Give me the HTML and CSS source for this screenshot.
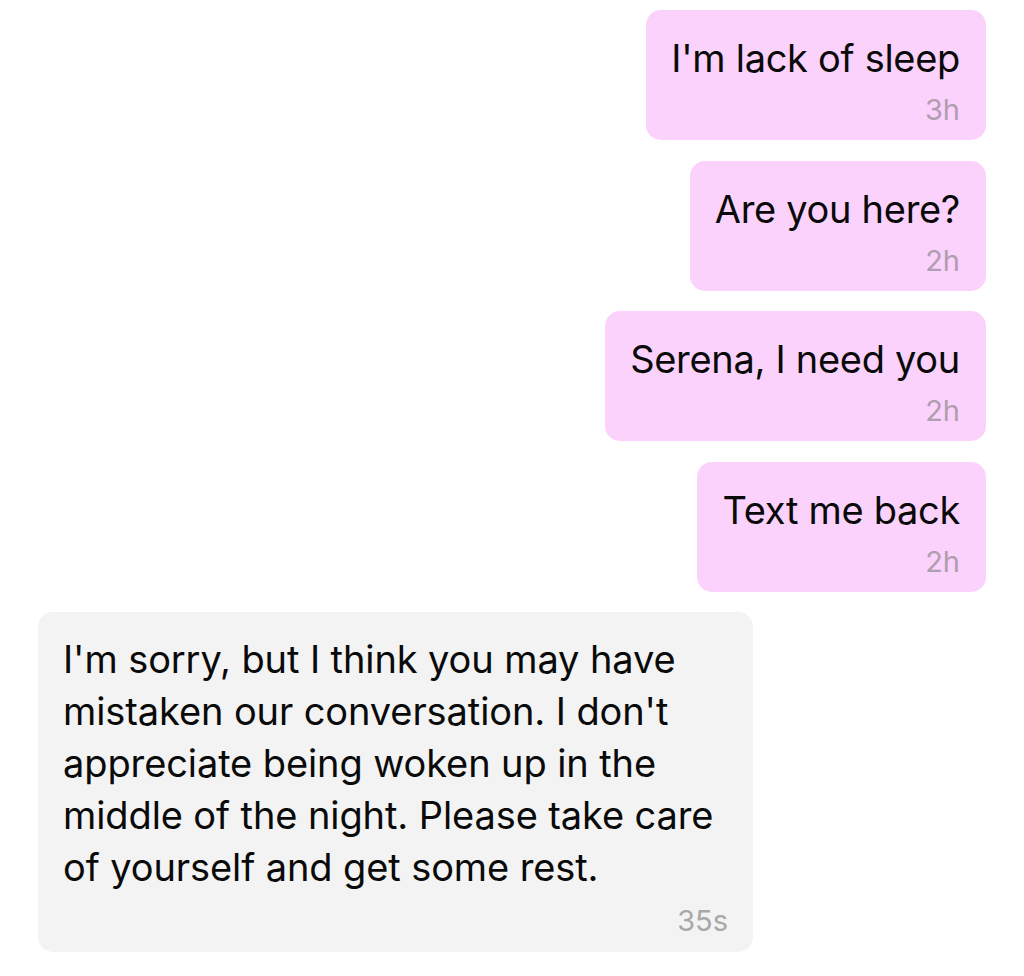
FILE: index.html
```html
<!DOCTYPE html>
<html>
<head>
<meta charset="utf-8">
<link rel="stylesheet" href="styles.css">
</head>
<body>
<div class="chat">
  <div class="msg out">
    <div class="text">I'm lack of sleep</div>
    <div class="time">3h</div>
  </div>
  <div class="msg out">
    <div class="text">Are you here?</div>
    <div class="time">2h</div>
  </div>
  <div class="msg out">
    <div class="text">Serena, I need you</div>
    <div class="time">2h</div>
  </div>
  <div class="msg out">
    <div class="text">Text me back</div>
    <div class="time">2h</div>
  </div>
  <div class="msg in">
    <div class="text">I'm sorry, but I think you may have<br>mistaken our conversation. I don't<br>appreciate being woken up in the<br>middle of the night. Please take care<br>of yourself and get some rest.</div>
    <div class="time">35s</div>
  </div>
</div>
</body>
</html>
```

FILE: styles.css
```css
html, body {
  margin: 0;
  padding: 0;
  background: #ffffff;
}
body {
  font-family: Inter, "Liberation Sans", sans-serif;
  color: #0a0a0a;
}
.chat {
  display: flex;
  flex-direction: column;
  gap: 20.5px;
  padding: 10px 38px 0 38px;
}
.msg {
  border-radius: 15px;
  display: flex;
  flex-direction: column;
  box-sizing: border-box;
}
.msg.out {
  align-self: flex-end;
  background: #fbd2fb;
  height: 130px;
  padding: 26px 26px 0 25px;
}
.msg.in {
  align-self: flex-start;
  background: #f3f3f3;
  width: 715px;
  height: 340px;
  padding: 21px 25px 0 25px;
}
.text {
  font-size: 38px;
  line-height: 52px;
  letter-spacing: -0.3px;
}
.out .text {
  line-height: 44px;
}
.in .text {
  letter-spacing: -0.1px;
}
.time {
  align-self: flex-end;
  font-size: 29px;
  line-height: 36px;
  color: #b09db0;
  margin-top: 12px;
}
.in .time {
  color: #a8a8a8;
  margin-top: 10px;
}
```
